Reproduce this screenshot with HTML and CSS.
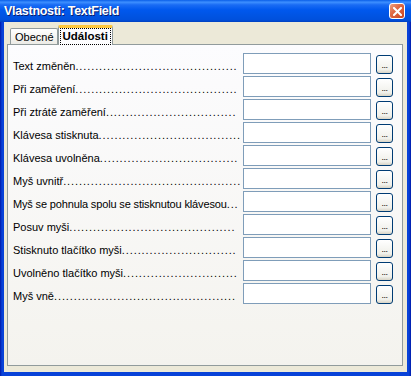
FILE: index.html
```html
<!DOCTYPE html>
<html>
<head>
<meta charset="utf-8">
<link rel="stylesheet" href="styles.css">
</head>
<body>
<div class="window">
  <div class="titlebar">
    <span class="title">Vlastnosti: TextField</span>
    <span class="close"><svg width="9" height="9" viewBox="0 0 9 9"><path d="M1 1 L8 8 M8 1 L1 8" stroke="#fff" stroke-width="2" stroke-linecap="square"/></svg></span>
  </div>
  <div class="client">
    <div class="tabs">
      <div class="tab">Obecné</div>
      <div class="tab active"><span class="focus">Události</span></div>
    </div>
    <div class="panel">
      <div class="row"><span class="label">Text změněn</span><span class="dots">.........................................</span><span class="field"></span><span class="btn">...</span></div>
      <div class="row"><span class="label">Při zaměření</span><span class="dots">.........................................</span><span class="field"></span><span class="btn">...</span></div>
      <div class="row"><span class="label">Při ztrátě zaměření</span><span class="dots">.................................</span><span class="field"></span><span class="btn">...</span></div>
      <div class="row"><span class="label">Klávesa stisknuta</span><span class="dots">....................................</span><span class="field"></span><span class="btn">...</span></div>
      <div class="row"><span class="label">Klávesa uvolněna</span><span class="dots">...................................</span><span class="field"></span><span class="btn">...</span></div>
      <div class="row"><span class="label">Myš uvnitř</span><span class="dots">.............................................</span><span class="field"></span><span class="btn">...</span></div>
      <div class="row"><span class="label tight">Myš se pohnula spolu se stisknutou klávesou</span><span class="dots">...</span><span class="field"></span><span class="btn">...</span></div>
      <div class="row"><span class="label">Posuv myši</span><span class="dots">..........................................</span><span class="field"></span><span class="btn">...</span></div>
      <div class="row"><span class="label">Stisknuto tlačítko myši</span><span class="dots">.............................</span><span class="field"></span><span class="btn">...</span></div>
      <div class="row"><span class="label">Uvolněno tlačítko myši</span><span class="dots">.............................</span><span class="field"></span><span class="btn">...</span></div>
      <div class="row"><span class="label">Myš vně</span><span class="dots">..............................................</span><span class="field"></span><span class="btn">...</span></div>
    </div>
  </div>
</div>
</body>
</html>
```
FILE: styles.css
```css
html, body {
  margin: 0;
  padding: 0;
  background: #0831d9;
}
.window {
  width: 411px;
  height: 376px;
  box-sizing: border-box;
  display: flex;
  flex-direction: column;
  background: linear-gradient(90deg, #0019a8 0px, #0842d8 2px, #0842d8 409px, #0019a8 411px);
  font-family: "Liberation Sans", Arial, sans-serif;
  font-size: 11px;
  color: #000;
}
.titlebar {
  height: 22px;
  flex: none;
  display: flex;
  align-items: center;
  justify-content: space-between;
  padding: 0 6px 0 4px;
  background: linear-gradient(#0a5fe8 0%, #3d8fff 10%, #1a6cf4 22%, #0058ee 45%, #0054e3 70%, #0050dc 90%, #0040c0 100%);
}
.title {
  color: #fff;
  font-family: "Liberation Sans", Arial, sans-serif;
  font-weight: bold;
  font-size: 12.5px;
  text-shadow: 1px 1px 0 #0a1e6e;
  letter-spacing: -0.3px;
}
.close {
  width: 16px;
  height: 16px;
  box-sizing: border-box;
  border: 1px solid #fff;
  border-radius: 3px;
  background: linear-gradient(135deg, #eca080 0%, #e06a44 40%, #c84420 100%);
  display: flex;
  align-items: center;
  justify-content: center;
}
.client {
  flex: 1;
  margin: 0 4px 4px 4px;
  background: #ece9d8;
  padding: 2px 4px 6px 3px;
  display: flex;
  flex-direction: column;
}
.tabs {
  display: flex;
  align-items: flex-end;
  height: 20px;
  padding-left: 3px;
  position: relative;
  z-index: 1;
}
.tab {
  height: 15px;
  padding: 0 3px 0 4px;
  border: 1px solid #919b9c;
  border-bottom: none;
  border-radius: 2px 2px 0 0;
  background: linear-gradient(#ffffff, #ecebe6);
  display: flex;
  align-items: center;
}
.tab.active {
  padding: 0 1px;
  border-top: 3px solid #ffc83c;
  background: #fcfcfe;
  font-weight: bold;
  font-size: 11.5px;
  margin-bottom: -1px;
  height: 17px;
}
.focus {
  border: 1px dotted #000;
  padding: 0 2px;
  line-height: 15px;
}
.panel {
  flex: 1;
  border: 1px solid #919b9c;
  background: linear-gradient(#fcfcfe, #f4f3ee);
  padding: 8px 9px 0 5px;
  display: flex;
  flex-direction: column;
  gap: 2px;
}
.row {
  display: flex;
  align-items: center;
  height: 21px;
}
.label {
  white-space: nowrap;
  flex: none;
  padding-top: 4px;
}
.label.tight {
  letter-spacing: -0.15px;
}
.dots {
  flex: 1;
  min-width: 0;
  overflow: hidden;
  white-space: nowrap;
  padding-top: 4px;
  margin-right: 2px;
  letter-spacing: 0.9px;
}
.field {
  width: 128px;
  height: 21px;
  box-sizing: border-box;
  border: 1px solid #7f9db9;
  background: #fff;
  flex: none;
}
.btn {
  width: 17px;
  height: 19px;
  box-sizing: border-box;
  margin-left: 5px;
  margin-top: 1px;
  border: 1px solid #003c74;
  border-radius: 3px;
  background: linear-gradient(#ffffff, #f0f0ea 80%, #d8d4c6);
  flex: none;
  display: flex;
  align-items: flex-end;
  justify-content: center;
  padding-bottom: 3px;
  font-size: 9px;
  line-height: 9px;
  letter-spacing: -0.5px;
  overflow: hidden;
}
```
